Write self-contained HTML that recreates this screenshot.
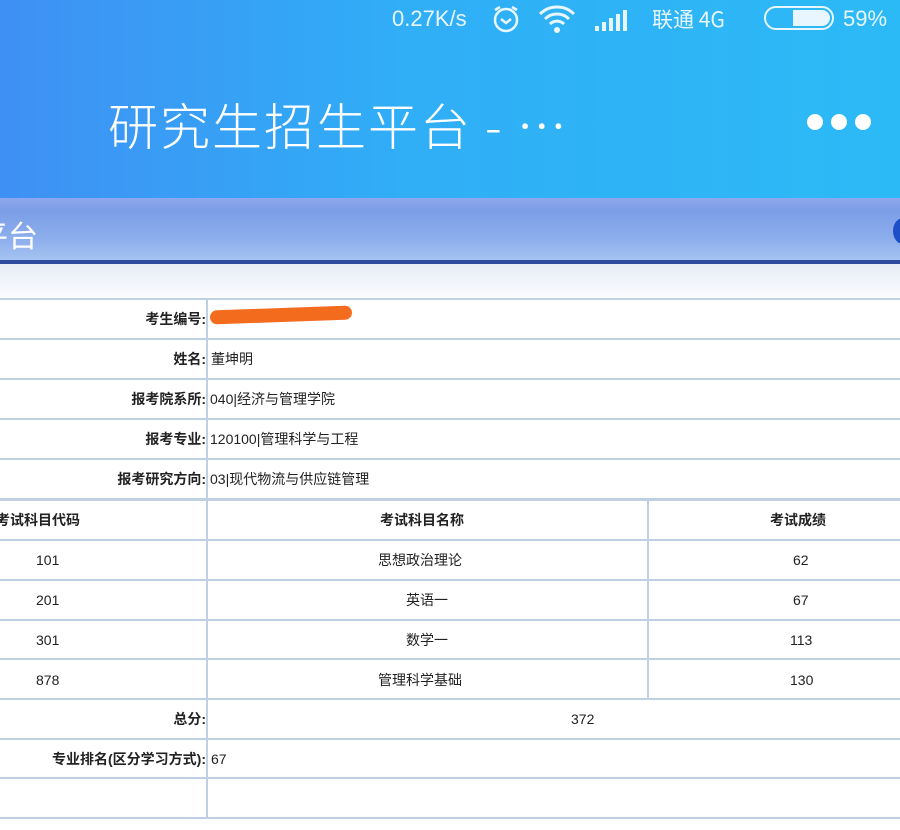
<!DOCTYPE html>
<html><head><meta charset="utf-8"><style>
*{margin:0;padding:0;box-sizing:border-box}
body{width:900px;height:830px;overflow:hidden;background:#fff;font-family:"Liberation Sans","Noto Sans CJK SC",sans-serif;position:relative}
.hdr{position:absolute;left:0;top:0;width:900px;height:198px;background:linear-gradient(90deg,#3f90f4 0%,#30aef6 45%,#2cbaf6 100%)}
.st{position:absolute;top:6px;color:#e8f6ff;font-size:22px;font-family:"Liberation Sans Narrow","Liberation Sans","Noto Sans CJK SC",sans-serif}
.title{position:absolute;left:108px;top:88px;color:#fff;font-size:50px;letter-spacing:2px;font-family:"Noto Sans CJK SC",sans-serif;font-weight:300}
.dot{position:absolute;top:114px;width:16px;height:16px;border-radius:50%;background:#fff}
.bar{position:absolute;left:0;top:198px;width:900px;height:62px;background:linear-gradient(180deg,#8fa8ee 0%,#7b9de6 20%,#8fb0ec 70%,#a5c4f2 100%)}
.bar2{position:absolute;left:0;top:260px;width:900px;height:4px;background:#2d4a9c}
.band{position:absolute;left:0;top:264px;width:900px;height:35px;background:linear-gradient(180deg,#e6ecf6,#fbfcfe)}
.h{position:absolute;left:0;width:900px;height:2px;background:#bfd0e2}
.v{position:absolute;width:2px;background:#bfd0e2}
.t{position:absolute;font-size:14px;color:#222;white-space:nowrap;line-height:20px}
.lb{font-weight:bold;text-align:right;right:694px}
</style></head><body>
<div class="hdr"></div>
<div class="st" style="left:392px">0.27K/s</div>
<svg style="position:absolute;left:489px;top:4px" width="34" height="30" viewBox="0 0 34 30"><circle cx="17" cy="16" r="11" fill="none" stroke="#e8f6ff" stroke-width="2.5"/><path d="M12 15l5 4 5-4" fill="none" stroke="#e8f6ff" stroke-width="2.5"/><path d="M6 6l5-3M28 6l-5-3" stroke="#e8f6ff" stroke-width="2.5"/></svg>
<svg style="position:absolute;left:537px;top:4px" width="40" height="30" viewBox="0 0 40 30"><path d="M3 10a24 24 0 0 1 34 0M8 15a17 17 0 0 1 24 0M13 20a10 10 0 0 1 14 0" fill="none" stroke="#e8f6ff" stroke-width="3"/><circle cx="20" cy="26" r="3" fill="#e8f6ff"/></svg>
<svg style="position:absolute;left:595px;top:8px" width="38" height="24"><rect x="0" y="18" width="4" height="5" fill="#e8f6ff"/><rect x="7" y="14" width="4" height="9" fill="#e8f6ff"/><rect x="14" y="10" width="4" height="13" fill="#e8f6ff"/><rect x="21" y="6" width="4" height="17" fill="#e8f6ff"/><rect x="28" y="2" width="4" height="21" fill="#e8f6ff"/></svg>
<div class="st" style="left:652px;font-family:'Noto Sans CJK SC',sans-serif;font-size:21px;top:4px">联通 4G</div>
<div style="position:absolute;left:764px;top:6px;width:70px;height:24px;border:2px solid #e8f6ff;border-radius:12px"></div>
<div style="position:absolute;left:793px;top:10px;width:37px;height:16px;background:#e8f6ff;border-radius:0 8px 8px 0"></div>
<div class="st" style="left:843px">59%</div>
<div class="title">研究生招生平台 - …</div>
<div class="dot" style="left:807px"></div><div class="dot" style="left:831px"></div><div class="dot" style="left:855px"></div>
<div class="bar"></div>
<div style="position:absolute;left:-22px;top:212px;color:#fff;font-size:30px;font-family:'Noto Sans CJK SC',sans-serif">平台</div>
<div style="position:absolute;left:893px;top:218px;width:20px;height:26px;border-radius:50%;background:#1e4fc8"></div>
<div class="bar2"></div><div class="band"></div>
<div class="h" style="top:298px"></div><div class="h" style="top:338px"></div><div class="h" style="top:378px"></div><div class="h" style="top:418px"></div><div class="h" style="top:458px"></div><div class="h" style="top:498px;height:3px"></div><div class="h" style="top:539px"></div><div class="h" style="top:579px"></div><div class="h" style="top:619px"></div><div class="h" style="top:658px"></div><div class="h" style="top:698px"></div><div class="h" style="top:738px"></div><div class="h" style="top:777px"></div><div class="h" style="top:817px"></div>
<div class="v" style="left:206px;top:298px;height:520px"></div>
<div class="v" style="left:647px;top:499px;height:200px"></div>
<div style="position:absolute;left:210px;top:308px;width:142px;height:14px;background:#f36b1c;border-radius:7px;transform:rotate(-2deg)"></div>
<div class="t lb" style="top:309px">考生编号:</div>
<div class="t lb" style="top:349px">姓名:</div><div class="t" style="left:211px;top:349px">董坤明</div>
<div class="t lb" style="top:389px">报考院系所:</div><div class="t" style="left:210px;top:389px">040|经济与管理学院</div>
<div class="t lb" style="top:429px">报考专业:</div><div class="t" style="left:210px;top:429px">120100|管理科学与工程</div>
<div class="t lb" style="top:469px">报考研究方向:</div><div class="t" style="left:210px;top:469px">03|现代物流与供应链管理</div>
<div class="t" style="left:-4px;top:510px;font-weight:bold">考试科目代码</div>
<div class="t" style="left:380px;top:510px;font-weight:bold">考试科目名称</div>
<div class="t" style="left:770px;top:510px;font-weight:bold">考试成绩</div>
<div class="t" style="left:36px;top:550px">101</div><div class="t" style="left:378px;top:550px">思想政治理论</div><div class="t" style="left:793px;top:550px">62</div>
<div class="t" style="left:36px;top:590px">201</div><div class="t" style="left:406px;top:590px">英语一</div><div class="t" style="left:793px;top:590px">67</div>
<div class="t" style="left:36px;top:630px">301</div><div class="t" style="left:406px;top:630px">数学一</div><div class="t" style="left:790px;top:630px">113</div>
<div class="t" style="left:36px;top:670px">878</div><div class="t" style="left:378px;top:670px">管理科学基础</div><div class="t" style="left:790px;top:670px">130</div>
<div class="t lb" style="top:709px">总分:</div><div class="t" style="left:571px;top:709px">372</div>
<div class="t lb" style="top:749px">专业排名(区分学习方式):</div><div class="t" style="left:211px;top:749px">67</div>
</body></html>
